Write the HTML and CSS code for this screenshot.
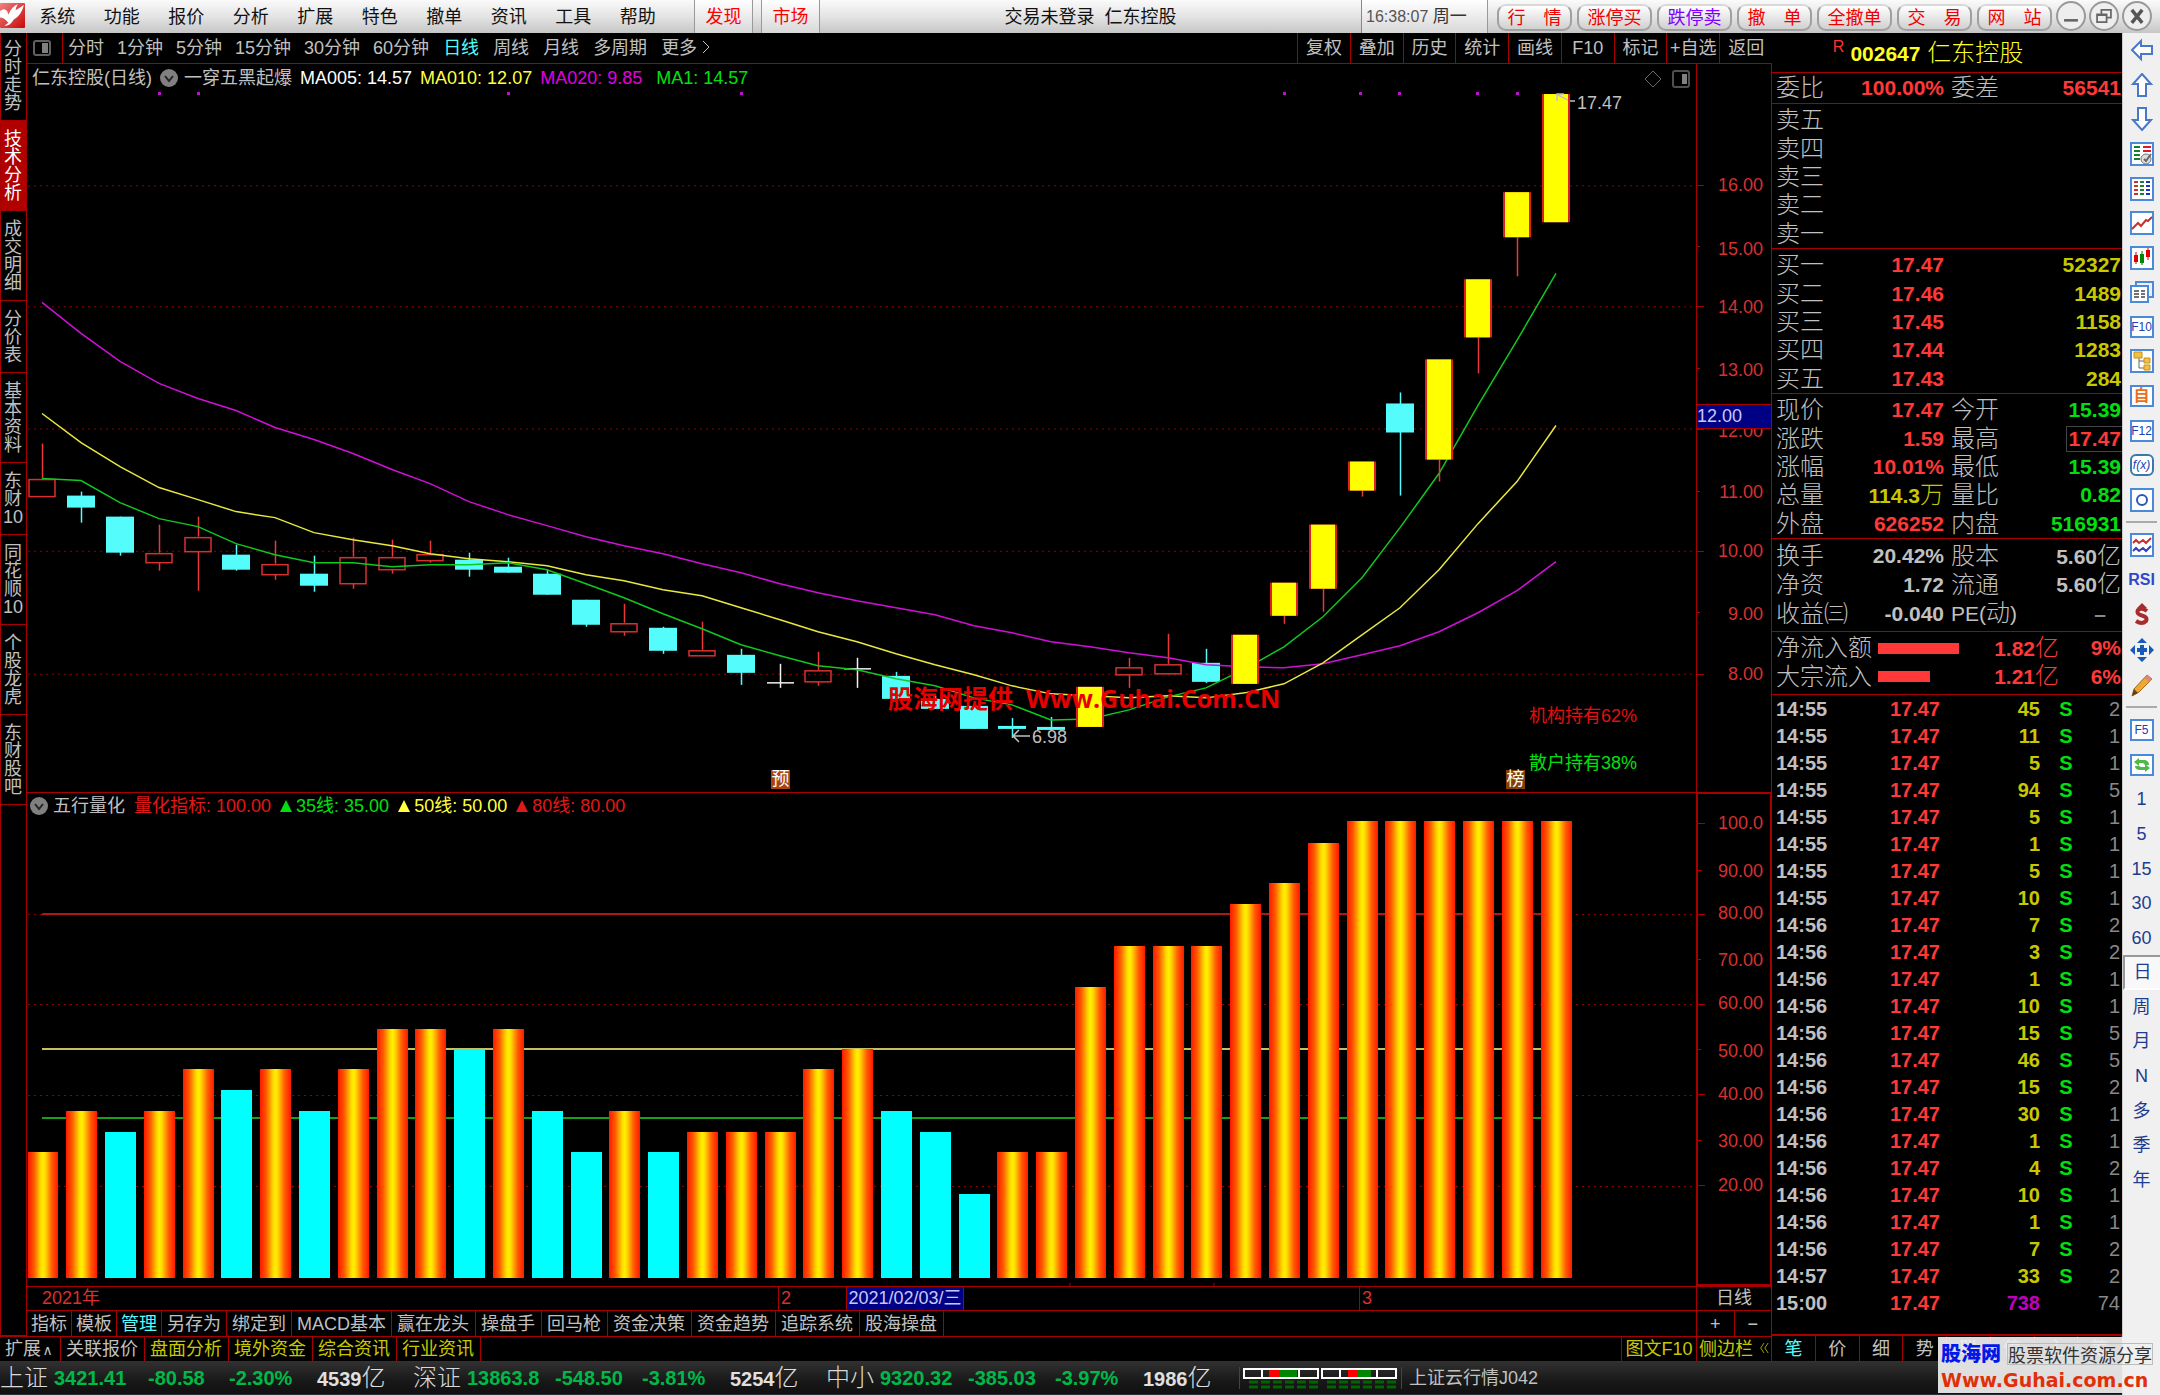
FILE: index.html
```html
<!DOCTYPE html>
<html lang="zh-CN">
<head>
<meta charset="utf-8">
<title>仁东控股 002647</title>
<link rel="stylesheet" href="styles.css">
</head>
<body>
<header class="topbar">
  <svg class="logo" viewBox="0 0 24 24" aria-hidden="true">
    <defs><linearGradient id="logoFill" x1="0" y1="0" x2="1" y2="1"><stop offset="0" stop-color="#f08080"/><stop offset="1" stop-color="#c80808"/></linearGradient></defs>
    <rect width="24" height="24" rx="1" fill="url(#logoFill)"/>
    <path d="M0 8 Q4 4 7 8 L8 11 Q12 3 17 1 Q15 5 15 7 Q20 4 23 2 Q20 13 13 16 Q10 22 4 22 L8 19 Q4 14 0 14 Z" fill="#fff"/>
  </svg>
  <nav class="menu">
    <button>系统</button><button>功能</button><button>报价</button><button>分析</button><button>扩展</button><button>特色</button><button>撤单</button><button>资讯</button><button>工具</button><button>帮助</button>
  </nav>
  <div class="quick">
    <button>发现</button><button>市场</button>
  </div>
  <div class="caption">交易未登录&nbsp; 仁东控股</div>
  <div class="clock">16:38:07 <span>周一</span></div>
  <div class="pills">
    <button>行　情</button><button>涨停买</button><button class="violet">跌停卖</button><button>撤　单</button><button>全撤单</button><button>交　易</button><button>网　站</button>
  </div>
  <div class="window-buttons">
    <button aria-label="最小化"><svg viewBox="0 0 30 30"><path d="M7 20h16" stroke="#666" stroke-width="3"/></svg></button>
    <button aria-label="还原"><svg viewBox="0 0 30 30"><path d="M12 12V8h11v9h-4M7 13h11v9H7zM7 14h11" fill="none" stroke="#666" stroke-width="2"/></svg></button>
    <button aria-label="关闭"><svg viewBox="0 0 30 30"><path d="M9 8l12 15M21 8L9 23" stroke="#555" stroke-width="4"/></svg></button>
  </div>
</header>

<div class="body">
<div class="desk">
<main class="workspace">
  <section class="left">
    <div class="analysis">
      <nav class="side-tabs">
        <button>分时走势</button><button class="active">技术分析</button><button>成交明细</button><button>分价表</button><button>基本资料</button><button>东财10</button><button>同花顺10</button><button>个股龙虎</button><button>东财股吧</button>
      </nav>
      <div class="chart">
        <div class="periods">
          <button class="panel-toggle" aria-label="侧栏"><svg viewBox="0 0 18 16"><rect x="1" y="1" width="16" height="14" rx="2" fill="none" stroke="#606060" stroke-width="2"/><rect x="9" y="3" width="6" height="10" fill="#808080"/></svg></button>
          <nav class="period-list">
            <button>分时</button><button>1分钟</button><button>5分钟</button><button>15分钟</button><button>30分钟</button><button>60分钟</button><button class="active">日线</button><button>周线</button><button>月线</button><button>多周期</button><button>更多<svg class="chev" viewBox="0 0 10 14"><path d="M2 1l6 6-6 6" fill="none" stroke="#c0c0c0"/></svg></button>
          </nav>
          <nav class="chart-tools">
            <button>复权</button><button>叠加</button><button>历史</button><button>统计</button><button>画线</button><button>F10</button><button>标记</button><button>+自选</button><button>返回</button>
          </nav>
        </div>

        <div class="pane price-pane">
          <div class="plot">
            <svg id="price" class="canvas" viewBox="27 64 1669 727" preserveAspectRatio="none"></svg>
            <div class="legend">
              <span class="name">仁东控股(日线)</span>
              <svg class="drop" viewBox="0 0 18 18"><circle cx="9" cy="9" r="9" fill="#808080"/><path d="M5 7l4 5 4-5" fill="none" stroke="#222" stroke-width="2"/></svg>
              <span class="formula">一穿五黑起爆</span>
              <span class="white">MA005: 14.57</span><span class="yellow">MA010: 12.07</span><span class="magenta">MA020: 9.85</span><span class="green last">MA1: 14.57</span>
            </div>
            <div class="pane-icons">
              <svg viewBox="0 0 18 18"><path d="M9 1l8 8-8 8-8-8z" fill="none" stroke="#666"/></svg>
              <svg viewBox="0 0 18 18"><rect x="1" y="1" width="16" height="16" rx="2" fill="none" stroke="#505050" stroke-width="2"/><rect x="10" y="4" width="5" height="10" fill="#808080"/></svg>
            </div>
            <span class="mark high">17.47</span>
            <span class="mark low">6.98</span>
            <span class="mark hold-inst">机构持有62%</span>
            <span class="mark hold-retail">散户持有38%</span>
            <span class="badge forecast">预</span>
            <span class="badge board">榜</span>
            <span class="overlay">股海网提供&nbsp; Www.Guhai.Com.CN</span>
          </div>
          <div class="axis" id="priceAxis"><span class="cursor-price">12.00</span></div>
        </div>

        <div class="pane ind-pane">
          <div class="plot">
            <svg id="indicator" class="canvas" viewBox="27 792 1669 493" preserveAspectRatio="none"></svg>
            <div class="legend">
              <svg class="drop" viewBox="0 0 18 18"><circle cx="9" cy="9" r="9" fill="#808080"/><path d="M5 7l4 5 4-5" fill="none" stroke="#222" stroke-width="2"/></svg>
              <span class="title">五行量化</span><span class="red">量化指标: 100.00</span><span class="green"><i></i>35线: 35.00</span><span class="yellow"><i></i>50线: 50.00</span><span class="red"><i></i>80线: 80.00</span>
            </div>
          </div>
          <div class="axis framed" id="indAxis"></div>
        </div>

        <div class="dates">
          <div class="date-track">
            <span class="date year">2021年</span>
            <span class="date feb">2</span>
            <span class="date mar">3</span>
            <span class="cursor-date">2021/02/03/三</span>
          </div>
          <div class="date-unit">日线</div>
        </div>
        <div class="templates">
          <nav class="strip">
            <button>指标</button><button>模板</button><button class="active">管理</button><button>另存为</button><button>绑定到</button><button>MACD基本</button><button>赢在龙头</button><button>操盘手</button><button>回马枪</button><button>资金决策</button><button>资金趋势</button><button>追踪系统</button><button>股海操盘</button>
          </nav>
          <div class="zoomers"><button aria-label="放大">+</button><button aria-label="缩小">−</button></div>
        </div>
      </div>
    </div>
    <div class="extensions">
      <nav class="strip wide">
        <button>扩展<span class="caret">∧</span></button><button>关联报价</button><button class="gold">盘面分析</button><button class="gold">境外资金</button><button class="gold">综合资讯</button><button class="gold">行业资讯</button>
      </nav>
      <nav class="ext-right"><button>图文F10</button><button>侧边栏<svg class="chev" viewBox="0 0 12 14"><path d="M6 1L2 7l4 6M11 1L7 7l4 6" fill="none" stroke="#c0c000"/></svg></button></nav>
    </div>
  </section>

  <aside class="quote">
    <h1><sup>R</sup><b>002647</b> 仁东控股</h1>
    <dl class="rows one"><div><dt>委比</dt><dd class="r">100.00%</dd><dt>委差</dt><dd class="r">56541</dd></div></dl>
    <dl class="rows five">
      <div><dt>卖五</dt></div><div><dt>卖四</dt></div><div><dt>卖三</dt></div><div><dt>卖二</dt></div><div><dt>卖一</dt></div>
    </dl>
    <dl class="rows five">
      <div><dt>买一</dt><dd class="r">17.47</dd><dd class="y far">52327</dd></div>
      <div><dt>买二</dt><dd class="r">17.46</dd><dd class="y far">1489</dd></div>
      <div><dt>买三</dt><dd class="r">17.45</dd><dd class="y far">1158</dd></div>
      <div><dt>买四</dt><dd class="r">17.44</dd><dd class="y far">1283</dd></div>
      <div><dt>买五</dt><dd class="r">17.43</dd><dd class="y far">284</dd></div>
    </dl>
    <dl class="rows five">
      <div><dt>现价</dt><dd class="r">17.47</dd><dt>今开</dt><dd class="g">15.39</dd></div>
      <div><dt>涨跌</dt><dd class="r">1.59</dd><dt>最高</dt><dd class="r"><span class="boxed">17.47</span></dd></div>
      <div><dt>涨幅</dt><dd class="r">10.01%</dd><dt>最低</dt><dd class="g">15.39</dd></div>
      <div><dt>总量</dt><dd class="y">114.3<em>万</em></dd><dt>量比</dt><dd class="g">0.82</dd></div>
      <div><dt>外盘</dt><dd class="r">626252</dd><dt>内盘</dt><dd class="g">516931</dd></div>
    </dl>
    <dl class="rows three">
      <div><dt>换手</dt><dd>20.42%</dd><dt>股本</dt><dd>5.60<em>亿</em></dd></div>
      <div><dt>净资</dt><dd>1.72</dd><dt>流通</dt><dd>5.60<em>亿</em></dd></div>
      <div><dt>收益㈢</dt><dd>-0.040</dd><dt><b>PE(</b>动<b>)</b></dt><dd class="dash">–</dd></div>
    </dl>
    <div class="flows">
      <div><span class="lbl">净流入额</span><span class="track"><i style="width:81px"></i></span><b>1.82<em>亿</em></b><b>9%</b></div>
      <div><span class="lbl">大宗流入</span><span class="track"><i style="width:52px"></i></span><b>1.21<em>亿</em></b><b>6%</b></div>
    </div>
    <div class="ticks">
      <table><tbody id="ticks">
        <tr><td>14:55</td><td>17.47</td><td>45</td><td>S</td><td>2</td></tr>
        <tr><td>14:55</td><td>17.47</td><td>11</td><td>S</td><td>1</td></tr>
        <tr><td>14:55</td><td>17.47</td><td>5</td><td>S</td><td>1</td></tr>
        <tr><td>14:55</td><td>17.47</td><td>94</td><td>S</td><td>5</td></tr>
        <tr><td>14:55</td><td>17.47</td><td>5</td><td>S</td><td>1</td></tr>
        <tr><td>14:55</td><td>17.47</td><td>1</td><td>S</td><td>1</td></tr>
        <tr><td>14:55</td><td>17.47</td><td>5</td><td>S</td><td>1</td></tr>
        <tr><td>14:55</td><td>17.47</td><td>10</td><td>S</td><td>1</td></tr>
        <tr><td>14:56</td><td>17.47</td><td>7</td><td>S</td><td>2</td></tr>
        <tr><td>14:56</td><td>17.47</td><td>3</td><td>S</td><td>2</td></tr>
        <tr><td>14:56</td><td>17.47</td><td>1</td><td>S</td><td>1</td></tr>
        <tr><td>14:56</td><td>17.47</td><td>10</td><td>S</td><td>1</td></tr>
        <tr><td>14:56</td><td>17.47</td><td>15</td><td>S</td><td>5</td></tr>
        <tr><td>14:56</td><td>17.47</td><td>46</td><td>S</td><td>5</td></tr>
        <tr><td>14:56</td><td>17.47</td><td>15</td><td>S</td><td>2</td></tr>
        <tr><td>14:56</td><td>17.47</td><td>30</td><td>S</td><td>1</td></tr>
        <tr><td>14:56</td><td>17.47</td><td>1</td><td>S</td><td>1</td></tr>
        <tr><td>14:56</td><td>17.47</td><td>4</td><td>S</td><td>2</td></tr>
        <tr><td>14:56</td><td>17.47</td><td>10</td><td>S</td><td>1</td></tr>
        <tr><td>14:56</td><td>17.47</td><td>1</td><td>S</td><td>1</td></tr>
        <tr><td>14:56</td><td>17.47</td><td>7</td><td>S</td><td>2</td></tr>
        <tr><td>14:57</td><td>17.47</td><td>33</td><td>S</td><td>2</td></tr>
        <tr><td>15:00</td><td>17.47</td><td class="auction">738</td><td></td><td>74</td></tr>
      </tbody></table>
    </div>
    <nav class="quote-tabs"><button class="active">笔</button><button>价</button><button>细</button><button>势</button><button>联</button><button>值</button><button>主</button><button>筹</button></nav>
  </aside>
</main>

<footer class="status">
  <div class="index"><span>上证</span><b>3421.41</b><b class="mid">-80.58</b><b>-2.30%</b><b class="vol">4539<em>亿</em></b></div>
  <div class="index"><span>深证</span><b>13863.8</b><b>-548.50</b><b>-3.81%</b><b class="vol">5254<em>亿</em></b></div>
  <div class="index"><span>中小</span><b>9320.32</b><b>-385.03</b><b>-3.97%</b><b class="vol">1986<em>亿</em></b></div>
  <div class="meters">
    <svg viewBox="0 0 76 22"><path d="M1 2h74v9H1zM19 2v9M56 2v9" fill="none" stroke="#fff" stroke-width="2"/><path d="M26 3h11v7H26z" fill="#f00"/><path d="M37 3h17v7H37z" fill="#080"/><path d="M6 15h70M6 20h70" stroke="#006400" stroke-width="3" stroke-dasharray="9 3"/></svg>
    <svg viewBox="0 0 76 22"><path d="M1 2h74v9H1zM19 2v9M56 2v9" fill="none" stroke="#fff" stroke-width="2"/><path d="M27 3h10v7H27z" fill="#f00"/><path d="M37 3h13v7H37z" fill="#080"/><path d="M6 15h70M6 20h70" stroke="#006400" stroke-width="3" stroke-dasharray="9 3"/></svg>
  </div>
  <div class="server">上证云行情J042</div>
</footer>
</div>

<nav class="toolbar">
  <div class="group fourteen">
    <button aria-label="后退"><svg viewBox="0 0 24 24"><path d="M2 12l9-9v5h11v8H11v5z" fill="#fff" stroke="#4a78c8" stroke-width="2"/></svg></button>
    <button aria-label="向上"><svg viewBox="0 0 24 24"><path d="M12 1l9 10h-5v12H8V11H3z" fill="#fff" stroke="#4a78c8" stroke-width="2"/></svg></button>
    <button aria-label="向下"><svg viewBox="0 0 24 24"><path d="M12 23l9-10h-5V1H8v12H3z" fill="#fff" stroke="#4a78c8" stroke-width="2"/></svg></button>
    <button aria-label="报价设置"><svg viewBox="0 0 24 24"><rect x="1" y="1" width="22" height="22" fill="#fff" stroke="#4a8ad8" stroke-width="2"/><path d="M4 5h6M4 9h6M4 13h6M4 17h6" stroke="#18802c" stroke-width="2"/><path d="M13 5h8M13 9h8" stroke="#d81c2c" stroke-width="2"/><circle cx="16" cy="17" r="5" fill="#ddd" stroke="#777"/><path d="M14 17l2 2 5-7" stroke="#666" stroke-width="2" fill="none"/></svg></button>
    <button aria-label="报价表"><svg viewBox="0 0 24 24"><rect x="1" y="1" width="22" height="22" fill="#fff" stroke="#4a8ad8" stroke-width="2"/><path d="M6 4v16" stroke="#d03030" stroke-width="4" stroke-dasharray="2 2"/><path d="M12 4v16" stroke="#208030" stroke-width="4" stroke-dasharray="2 2"/><path d="M18 4v16" stroke="#2030c0" stroke-width="4" stroke-dasharray="2 2"/></svg></button>
    <button aria-label="走势"><svg viewBox="0 0 24 24"><rect x="1" y="1" width="22" height="22" fill="#fff" stroke="#4a8ad8" stroke-width="2"/><path d="M2 18l6-6 3 3 5-6 2 1 4-4" fill="none" stroke="#c83030" stroke-width="2"/></svg></button>
    <button aria-label="K线"><svg viewBox="0 0 24 24"><rect x="1" y="1" width="22" height="22" fill="#fff" stroke="#4a8ad8" stroke-width="2"/><path d="M6 6v12M18 2v12" stroke="#c00"/><path d="M4 9h4v7H4zM16 4h4v7h-4z" fill="#d00"/><path d="M12 5v14" stroke="#060"/><path d="M10 8h4v9h-4z" fill="#080"/></svg></button>
    <button aria-label="窗口"><svg viewBox="0 0 24 24"><path d="M6 2h17v15H6z" fill="#eef" stroke="#4a8ad8" stroke-width="2"/><path d="M1 6h17v16H1z" fill="#fff" stroke="#4a8ad8" stroke-width="2"/><path d="M4 11h5M4 14h5M4 17h5M11 11h4M11 14h4M11 17h4" stroke="#444" stroke-width="1.500"/></svg></button>
    <button class="key">F10</button>
    <button aria-label="分类"><svg viewBox="0 0 24 24"><rect x="1" y="1" width="22" height="22" fill="#fff" stroke="#4a8ad8" stroke-width="2"/><path d="M9 8v11h5M9 12h5" fill="none" stroke="#666"/><path d="M4 3h8v6H4zM14 9h6v5h-6zM14 16h6v5h-6z" fill="#f0c040" stroke="#c89020"/></svg></button>
    <button class="key orange">自</button>
    <button class="key">F12</button>
    <button class="key fx">f(x)</button>
    <button aria-label="圆"><svg viewBox="0 0 24 24"><rect x="1" y="1" width="22" height="22" fill="#fff" stroke="#4a8ad8" stroke-width="2"/><circle cx="12" cy="12" r="5" fill="none" stroke="#2a5ab8" stroke-width="2"/></svg></button>
  </div>
  <hr>
  <div class="group five">
    <button aria-label="叠加"><svg viewBox="0 0 24 24"><rect x="1" y="1" width="22" height="22" fill="#fff" stroke="#4a8ad8" stroke-width="2"/><path d="M3 10l3-3 3 3 4-3 3 3 5-5" fill="none" stroke="#c83030" stroke-width="2"/><path d="M3 18l3-3 3 3 4-3 3 3 5-5" fill="none" stroke="#3040c0" stroke-width="2"/></svg></button>
    <button class="rsi">RSI</button>
    <button aria-label="交易"><svg viewBox="0 0 24 24"><path d="M17 8Q12 4 8 7Q6 11 12 12.500Q18 14 16 18Q12 22 6 18" fill="none" stroke="#a82c2c" stroke-width="4"/><path d="M12 0l5 5H7z" fill="#a82c2c"/></svg></button>
    <button aria-label="移动"><svg viewBox="0 0 24 24"><path d="M12 0l5 5H7zM12 24l5-5H7zM0 12l5-5v10zM24 12l-5-5v10zM10 7h4v3h3v4h-3v3h-4v-3H7v-4h3z" fill="#1858b8"/></svg></button>
    <button aria-label="画线"><svg viewBox="0 0 24 24"><path d="M2 23l2-7L17 2l5 4L9 19z" fill="#f0a830" stroke="#a06818"/><path d="M17 2l5 4-3 3-5-4z" fill="#e08878"/><path d="M2 23l2-7 4 4z" fill="#604020"/></svg></button>
  </div>
  <hr>
  <div class="group fourteen">
    <button class="key">F5</button>
    <button aria-label="刷新"><svg viewBox="0 0 24 24"><rect x="1" y="2" width="22" height="20" fill="#fff" stroke="#4a8ad8" stroke-width="2"/><path d="M4 9l5-4v2h6q4 1 4 5h-4q-1-2-3-2H9v3zM20 15l-5 4v-2H9q-4-1-4-4h4q1 1 3 1h3v-3z" fill="#50b848"/></svg></button>
    <button>1</button><button>5</button><button>15</button><button>30</button><button>60</button><button class="active">日</button><button>周</button><button>月</button><button>N</button><button>多</button><button>季</button><button>年</button>
  </div>
</nav>
</div>

<a class="stamp" href="#"><span class="stamp-top"><b>股海网</b><i>股票软件资源分享</i></span><strong>Www.Guhai.com.cn</strong></a>
<script src="chart.js"></script>
</body>
</html>
```
FILE: styles.css
```css
* { box-sizing: border-box; }
:root {
  --line: #a80000;
  --grey: #c0c0c0;
}
body {
  margin: 0;
  height: 100vh;
  display: flex;
  flex-direction: column;
  overflow: hidden;
  background: #000;
  color: var(--grey);
  font: 400 18px/24px "Liberation Sans", "Noto Sans CJK SC", sans-serif;
}
button {
  font: inherit;
  color: inherit;
  background: none;
  border: 0;
  padding: 0;
  margin: 0;
  white-space: nowrap;
}
em, i { font-style: normal; }
em { font-weight: 300; }
b { font-weight: 700; }

/* top bar */
.topbar {
  flex: none;
  height: 33px;
  display: flex;
  align-items: stretch;
  background: linear-gradient(#fafafa, #e4e4e4 50%, #c6c6c6);
  color: #111;
}
.logo { width: 25px; height: 25px; margin-top: 3px; flex: none; }
.menu { display: flex; width: 645px; flex: none; margin-right: 24px; }
.menu button { flex: 1; }
.quick { display: flex; gap: 8px; flex: none; }
.quick button {
  width: 59px;
  color: #f00;
  background: linear-gradient(#fff, #d8d8d8);
  border-left: 1px solid #999;
  border-right: 1px solid #999;
}
.caption { flex: 1; text-align: center; line-height: 34px; }
.clock {
  flex: none;
  width: 127px;
  padding-left: 4px;
  border-left: 1px solid #888;
  border-right: 1px solid #999;
  background: linear-gradient(#fff, #d8d8d8);
  color: #555;
  font-size: 16px;
  line-height: 34px;
}
.clock span { font-size: 17px; color: #333; }
.pills { display: flex; gap: 5px; padding: 4px 4px 2px 9px; flex: none; }
.pills button {
  width: 75px;
  border-radius: 9px;
  border: 2px solid #a0a0a0;
  border-top-color: #d8d8d8;
  background: linear-gradient(#fff, #d0d0d0);
  color: #f00000;
  line-height: 22px;
}
.pills .violet { color: #8000ff; }
.window-buttons { display: flex; gap: 3px; padding: 1px 8px 2px 0; flex: none; }
.window-buttons button {
  width: 30px;
  height: 30px;
  border: 2px solid #999;
  border-radius: 50%;
  background: #eee;
}
.window-buttons svg { width: 26px; height: 26px; display: block; }

.body { flex: 1; min-height: 0; display: flex; }
.desk { flex: 1; min-width: 0; display: flex; flex-direction: column; }
.workspace { flex: 1; min-height: 0; display: flex; }
.left { flex: 1; min-width: 0; display: flex; flex-direction: column; }
.analysis { flex: 1; min-height: 0; display: flex; }

/* vertical tabs */
.side-tabs {
  width: 27px;
  flex: none;
  display: flex;
  flex-direction: column;
  border: 1px solid var(--line);
  border-top: 0;
}
.side-tabs button {
  padding: 9px 3px 8px 2px;
  border-bottom: 1px solid var(--line);
  white-space: normal;
  line-height: 18px;
}
.side-tabs button:first-child { padding: 7px 3px 8px 2px; }
.side-tabs .active { background: #b00000; color: #fff; }

/* chart column */
.chart { flex: 1; min-width: 0; display: flex; flex-direction: column; }
.periods { flex: none; height: 31px; display: flex; border-bottom: 1px solid var(--line); }
.panel-toggle { width: 36px; border-right: 1px solid var(--line); padding-left: 6px; }
.panel-toggle svg { width: 18px; height: 16px; display: block; }
.period-list { flex: 1; display: flex; gap: 13px; padding-left: 5px; }
.period-list button:nth-child(n+7) { padding-left: 1px; }
.chev { width: 10px; height: 14px; margin-left: 4px; }
.active { color: #54fcfc; }
.chart-tools { width: 475px; display: flex; flex: none; }
.chart-tools button { flex: 1 1 0; min-width: 0; border-left: 1px solid var(--line); }

.pane { display: flex; min-height: 0; }
.price-pane { flex: 728 1 0; border-bottom: 1px solid var(--line); }
.ind-pane { flex: 493 1 0; }
.plot { position: relative; flex: 1; min-width: 0; }
.canvas { position: absolute; inset: 0; width: 100%; height: 100%; display: block; }
.legend { position: relative; display: flex; align-items: center; padding: 2px 0 0 5px; }
.legend .drop { width: 18px; height: 18px; margin: 0 6px 0 8px; }
.legend .formula { margin-right: 8px; }
.legend .white, .legend .yellow { margin-right: 8px; }
.legend .magenta { margin-right: 14px; }
.white { color: #fff; }
.yellow { color: #ffff40; }
.magenta { color: #e000e0; }
.green { color: #00e010; }
.red { color: #e01818; }
.ind-pane .legend { padding: 1px 0 0 3px; }
.ind-pane .drop { margin: 0 5px 0 0; }
.ind-pane .legend span { margin-right: 9px; }
.legend i {
  display: inline-block;
  margin-right: 4px;
  border: 6px solid transparent;
  border-top: 0;
  border-bottom: 12px solid currentColor;
}
.pane-icons { position: absolute; top: 6px; right: 6px; display: flex; gap: 10px; }
.pane-icons svg { width: 18px; height: 18px; }
.mark, .badge, .overlay { position: absolute; white-space: nowrap; }
.high { left: 1550px; top: 27px; }
.low { left: 1005px; top: 661px; }
.hold-inst { left: 1502px; top: 640px; color: #e01010; }
.hold-retail { left: 1502px; top: 687px; color: #00e010; }
.badge {
  top: 706px;
  width: 19px;
  height: 19px;
  line-height: 19px;
  color: #fff;
  background: #a84410;
  text-align: center;
}
.forecast { left: 744px; }
.board { left: 1479px; background: #804008; }
.overlay {
  left: 861px;
  top: 618px;
  color: #e60000;
  font: 700 25px/32px "Open Sans", "Noto Sans CJK SC", sans-serif;
}

.axis {
  position: relative;
  width: 76px;
  flex: none;
  border-left: 1px solid var(--line);
  border-right: 1px solid var(--line);
}
.framed { border: 2px solid var(--line); border-top-width: 1px; }
.axis .tick {
  position: absolute;
  right: 8px;
  margin-top: -12px;
  color: #d83030;
}
.framed .tick { right: 7px; margin-top: -13px; }
.axis .notch { position: absolute; left: 0; width: 7px; border-top: 1px solid var(--line); }
.axis .notch.short { width: 3px; }
.cursor-price {
  position: absolute;
  z-index: 1;
  left: 0;
  right: 0;
  top: 340px;
  height: 25px;
  line-height: 23px;
  background: #000084;
  border: 1px solid var(--line);
  border-width: 1px 0;
  color: #c8c8f8;
}

.dates { flex: none; height: 24px; display: flex; border-top: 1px solid var(--line); line-height: 23px; }
.date-track { position: relative; flex: 1; }
.date-unit { width: 76px; border: 1px solid var(--line); border-width: 0 1px; text-align: center; }
.date { position: absolute; color: #d83030; padding-left: 2px; }
.year { left: 13px; }
.feb { left: 751px; border-left: 1px solid var(--line); }
.mar { left: 1332px; border-left: 1px solid var(--line); }
.cursor-date {
  position: absolute;
  left: 819px;
  width: 118px;
  text-align: center;
  background: #000084;
  color: #c8c8f8;
  border: 1px solid var(--line);
  border-width: 0 1px;
  white-space: nowrap;
}
.templates { flex: none; height: 26px; display: flex; justify-content: space-between; border-top: 1px solid var(--line); }
.strip { display: flex; line-height: 24px; }
.strip button { padding: 0 5px; border-right: 1px solid var(--line); }
.strip button:nth-child(-n+3) { padding: 0 4px; }
.strip button:nth-child(n+7) { padding-right: 6px; }
.strip.wide button { padding: 0 6px 0 5px; }
.caret { display: inline-block; width: 13px; text-align: center; font: 14px/20px "DejaVu Sans", sans-serif; }
.gold, .ext-right { color: #c8c800; }
.zoomers { display: flex; width: 76px; border: 1px solid var(--line); border-width: 0 1px; }
.zoomers button { flex: 1; }
.zoomers button + button { border-left: 1px solid var(--line); }
.extensions {
  flex: none;
  height: 26px;
  display: flex;
  justify-content: space-between;
  border: 1px solid var(--line);
  border-left: 0;
}
.ext-right { display: flex; }
.ext-right button { width: 75px; border-left: 1px solid var(--line); }
.ext-right .chev { margin-left: 6px; }

/* quote panel */
.quote { width: 350px; flex: none; display: flex; flex-direction: column; font-size: 24px; font-weight: 300; }
.quote > * { border-bottom: 1px solid var(--line); }
.quote h1 {
  margin: 0;
  height: 40px;
  flex: none;
  text-align: center;
  padding-right: 38px;
  font-size: 24px;
  font-weight: 300;
  line-height: 40px;
  color: #ffff20;
}
.quote h1 b { font-size: 21px; }
.quote sup { font: 400 16px/16px "Liberation Sans", sans-serif; color: #ff3030; margin-right: 6px; }
.rows { margin: 0; flex: none; display: grid; grid-auto-rows: 1fr; }
.one { height: 31px; }
.rows.five { height: 145px; padding-top: 2px; }
.three { height: 93px; padding: 3px 0; }
.rows > div { display: grid; grid-template-columns: 52px 120px 52px 124px; align-items: center; padding-left: 4px; }
.rows dt { white-space: nowrap; }
.rows dt + dd + dt { padding-left: 3px; }
.rows dd { margin: 0; text-align: right; font-size: 21px; font-weight: 700; padding-right: 4px; white-space: nowrap; }
.rows dd:nth-of-type(2) { padding-right: 3px; }
.rows dd.far { grid-column: 3 / span 2; }
.rows dd em, .flows em, .status em { font-size: 24px; line-height: 24px; }
.rows dt b { font-size: 21px; font-weight: 400; }
.rows .dash { color: #888; }
.rows dd.dash:nth-of-type(2) { padding-right: 18px; }
.boxed { display: inline-block; border: 1px solid #444; margin-right: -2px; padding: 0 1px; line-height: 24px; }
.r { color: #ff3838; }
.g { color: #00e010; }
.y { color: #c8c800; }
.flows { height: 63px; flex: none; padding: 2px 0 3px; display: grid; grid-auto-rows: 1fr; }
.flows > div { display: grid; grid-template-columns: 102px 100px 82px 62px; align-items: center; padding-left: 4px; }
.flows b { font-size: 21px; color: #ff3838; text-align: right; padding-right: 1px; }
.flows .track i { display: block; height: 11px; background: #ff3838; }
.ticks { flex: 1; min-height: 0; padding-top: 1px; }
.ticks table { width: 100%; border-collapse: collapse; table-layout: fixed; font: 700 20px/27px "Liberation Sans", sans-serif; }
.ticks td { padding: 0; height: 27px; text-align: right; }
.ticks td:nth-child(1) { width: 84px; text-align: left; padding-left: 4px; }
.ticks td:nth-child(2) { width: 84px; color: #ff3838; }
.ticks td:nth-child(3) { width: 100px; color: #c8c800; }
.ticks td:nth-child(4) { width: 52px; color: #00e010; text-align: center; }
.ticks td:nth-child(5) { color: #888; font-weight: 400; padding-right: 2px; }
.ticks td.auction { color: #c000c0; }
.quote-tabs { display: flex; flex: none; height: 27px; border-top: 1px solid var(--line); font-size: 18px; font-weight: 400; }
.quote-tabs button { flex: 1; border-right: 1px solid var(--line); }

/* status bar */
.status {
  flex: none;
  height: 33px;
  display: flex;
  align-items: center;
  background: linear-gradient(#303030, #181818 60%, #101010);
  border-bottom: 1px solid #28303c;
}
.index { width: 413px; flex: none; display: grid; grid-template-columns: 54px 88px 87px 88px 96px; align-items: center; color: #00b848; }
.index span { font-size: 24px; font-weight: 300; color: #d8d8d8; }
.index b { font-size: 20px; white-space: nowrap; }
.index .mid { padding-left: 6px; }
.index .vol { color: #e0e0e0; }
.meters { display: flex; gap: 2px; padding: 0 4px 0 3px; border: 1px solid #444; border-width: 0 1px; }
.meters svg { width: 76px; height: 22px; display: block; }
.server { padding-left: 7px; }

/* right toolbar */
.toolbar { width: 38px; flex: none; background: #f0f0f0; color: #1c3c90; border-left: 1px solid #ccc; }
.group { display: grid; grid-auto-rows: 1fr; justify-items: stretch; }
.fourteen { height: 484px; }
.group.five { height: 174px; }
.group button { display: flex; align-items: center; justify-content: center; }
.group svg { width: 24px; height: 24px; }
.toolbar hr { margin: 4px 3px 5px; border: 0; border-top: 2px solid #aaa; }
.toolbar .active { border: 2px solid #999; border-right: 0; border-bottom-color: #fff; background: #f8f8f8; color: #1c3c90; }
.group .key {
  width: 24px;
  height: 22px;
  margin: auto;
  border: 2px solid #4a8ad8;
  background: #fff;
  color: #2040b0;
  font-size: 12px;
}
.group .orange { color: #e87020; font-size: 16px; font-weight: 700; }
.group .fx { border-radius: 6px; font-style: italic; border-color: #3a7aa8; }
.group .rsi { font-weight: 700; font-size: 16px; color: #3048c8; }

/* corner stamp */
.stamp {
  position: absolute;
  right: 0;
  bottom: 2px;
  width: 222px;
  height: 56px;
  padding: 4px 3px 0;
  background: rgba(240, 240, 240, .92);
  text-decoration: none;
}
.stamp-top { display: flex; gap: 6px; align-items: center; line-height: 26px; }
.stamp b { color: #0018e8; font-size: 20px; font-weight: 900; }
.stamp i { color: #333; font: 400 18px/20px "Noto Sans CJK SC", sans-serif; border: 1px solid #bbb; white-space: nowrap; }
.stamp strong { display: block; color: #e03008; font: 700 19px/26px "DejaVu Sans", sans-serif; }
```
FILE: chart.js
```js
const NS = 'http://www.w3.org/2000/svg';
const price = document.getElementById('price');
const ind = document.getElementById('indicator');
const X0 = 42.4, STEP = 38.8;
const cx = i => Math.round(X0 + i * STEP);

function add(parent, tag, attrs) {
  const el = document.createElementNS(NS, tag);
  for (const k in attrs) el.setAttribute(k, attrs[k]);
  parent.appendChild(el);
  return el;
}
const line = (p, x1, y1, x2, y2, stroke, w = 1, extra = {}) =>
  add(p, 'line', { x1, y1, x2, y2, stroke, 'stroke-width': w, ...extra });
const rect = (p, x, y, width, height, fill, extra = {}) =>
  add(p, 'rect', { x, y, width, height, fill, ...extra });

// h hollow, c falling, y limit-up, x doji: [kind, body top, body bottom, wick top, wick bottom]
const candles = [
  ['h',478,496,443,496],['c',495,507,491,522],['c',516,552,516,555],['h',552,562,524,570],
  ['h',536,551,516,590],['c',554,569,544,570],['h',563,574,540,579],['c',573,585,555,591],
  ['h',556,583,537,588],['h',556,569,539,573],['h',553,560,540,562],['c',559,569,552,576],
  ['c',566,572,557,572],['c',573,594,569,594],['c',599,624,599,626],['h',622,631,603,635],
  ['c',627,650,626,653],['h',649,655,621,655],['c',654,672,648,684],['x',682,682,663,687],
  ['h',669,681,651,685],['x',668,668,657,687],['c',675,698,671,698],['c',698,708,695,708],
  ['c',705,728,705,728],['c',725,727,717,737],['c',726,729,716,729],['y',686,726,686,726],
  ['h',666,674,657,687],['h',663,673,633,673],['c',662,681,648,682],['y',634,683,634,683],
  ['y',582,615,582,623],['y',524,588,524,611],['y',461,490,461,496],['c',403,432,392,495],
  ['y',359,459,359,481],['y',279,337,279,373],['y',192,237,192,276],['y',94,222,94,222]
];
const ma20 = [302,333,361,383,398,410,427,439,453,469,483,501,514,525,536,545,553,563,572,583,592,600,607,614,625,632,641,646,652,657,664,666,667,663,654,645,631,612,590,561];
const ma10 = [413,442,466,487,499,511,517,532,539,545,553,558,561,565,574,580,589,595,607,619,631,641,653,664,674,685,693,695,697,695,697,692,683,662,634,607,569,523,481,425];
const ma5 = [478,480,502,518,526,543,554,562,562,566,564,564,562,569,583,597,613,628,644,655,665,669,678,685,697,704,719,718,709,696,687,668,646,616,577,527,473,405,340,273];

const grid = (p, y) => line(p, 28, y + .5, 1696, y + .5, '#900000', 1, { 'stroke-dasharray': '2 4' });
[185, 306, 428, 550, 673].forEach(y => grid(price, y));
[159, 198, 508, 741, 1284, 1360, 1399, 1477, 1517].forEach(x => rect(price, x - 1, 92, 3, 3, '#c010d0'));

function drawCandle([kind, t, b, wt, wb], i) {
  const x = cx(i), l = x - 14;
  if (kind === 'h') {
    line(price, x + .5, wt, x + .5, t, '#e83838', 1.5);
    line(price, x + .5, b, x + .5, wb, '#e83838', 1.5);
    rect(price, l + 1, t + 1, 26, Math.max(b - t - 1, 3), 'none', { stroke: '#d83030', 'stroke-width': 1.5 });
  } else if (kind === 'x') {
    line(price, x + .5, wt, x + .5, wb, '#f0f0f0', 1.5);
    line(price, x - 13, t, x + 14, t, '#f0f0f0', 1.5);
  } else if (kind === 'c') {
    line(price, x + .5, wt, x + .5, wb, '#54fcfc', 1.5);
    rect(price, l, t, 28, Math.max(b - t, 3), '#54fcfc');
  } else {
    line(price, x + .5, b, x + .5, wb, '#e83838', 1.5);
    rect(price, l, t, 28, b - t, '#e02020');
    rect(price, l + 2, t, 24, b - t, '#ffff00');
  }
}
candles.forEach((c, i) => c[0] !== 'y' && drawCandle(c, i));
[[ma20, '#d010d8'], [ma10, '#e8e840'], [ma5, '#10c820']].forEach(([v, stroke]) =>
  add(price, 'polyline', {
    points: v.map((y, i) => cx(i) + ',' + y).join(' '),
    fill: 'none', stroke, 'stroke-width': 1.5
  }));
candles.forEach((c, i) => c[0] === 'y' && drawCandle(c, i));

// extreme-price pointers
add(price, 'path', { d: 'M1558 95L1568 100M1570 101h5M1557 101v-7h7', fill: 'none', stroke: '#c0c0c0', 'stroke-width': 1.5 });
add(price, 'path', { d: 'M1013 735h17M1019 729l-6 6 6 6', fill: 'none', stroke: '#c0c0c0', 'stroke-width': 1.5 });

// indicator pane
const defs = add(ind, 'defs', {});
const g = add(defs, 'linearGradient', { id: 'fire' });
[[0, '#ff1800'], [.2, '#ff5a00'], [.42, '#ffd800'], [.5, '#fff000'], [.58, '#ffd800'], [.8, '#ff5a00'], [1, '#ff1800']]
  .forEach(([offset, c]) => add(g, 'stop', { offset, 'stop-color': c }));
[913, 1003, 1094, 1185].forEach(y => grid(ind, y));
line(ind, 42, 913, 1556, 913, '#b01818', 2);
line(ind, 42, 1048, 1556, 1048, '#c8c060', 2);
line(ind, 42, 1117, 1556, 1117, '#18a018', 2);
const bars = [1151,1110,-1131,1110,1068,-1089,1068,-1110,1068,1028,1028,-1048,1028,-1110,-1151,1110,-1151,1131,1131,1131,1068,1048,-1110,-1131,-1193,1151,1151,986,945,945,945,903,882,842,820,820,820,820,820,820];
bars.forEach((v, i) => {
  const y = Math.abs(v);
  const left = Math.max(cx(i) - 15, 28);
  rect(ind, left, y, cx(i) + 16 - left, 1277 - y, v < 0 ? '#00ffff' : 'url(#fire)');
});
// week marks on the time scale
[1070, 1214].forEach(x => line(ind, x, 1282, x, 1285, '#a80000', 1));

function axis(id, top, span, items) {
  const host = document.getElementById(id);
  items.forEach(([label, y, ty, major]) => {
    const t = document.createElement('span');
    t.className = 'tick';
    t.textContent = label;
    t.style.top = (y - top) / span * 100 + '%';
    const n = document.createElement('span');
    n.className = major ? 'notch' : 'notch short';
    n.style.top = (ty - top) / span * 100 + '%';
    host.append(t, n);
  });
}
axis('priceAxis', 64, 727, [
  ['16.00', 185, 185, 1], ['15.00', 249, 246, 0], ['14.00', 307, 306, 1], ['13.00', 370, 368, 0],
  ['12.00', 430, 428, 1], ['11.00', 491, 490, 0], ['10.00', 550, 550, 1], ['9.00', 613, 611, 0], ['8.00', 673, 673, 1]
]);
axis('indAxis', 792, 493, [
  ['100.0', 822, 821, 1], ['90.00', 870, 868, 0], ['80.00', 913, 913, 1], ['70.00', 960, 958, 0], ['60.00', 1003, 1003, 1],
  ['50.00', 1052, 1049, 0], ['40.00', 1095, 1094, 1], ['30.00', 1142, 1140, 0], ['20.00', 1186, 1185, 1]
]);
```
